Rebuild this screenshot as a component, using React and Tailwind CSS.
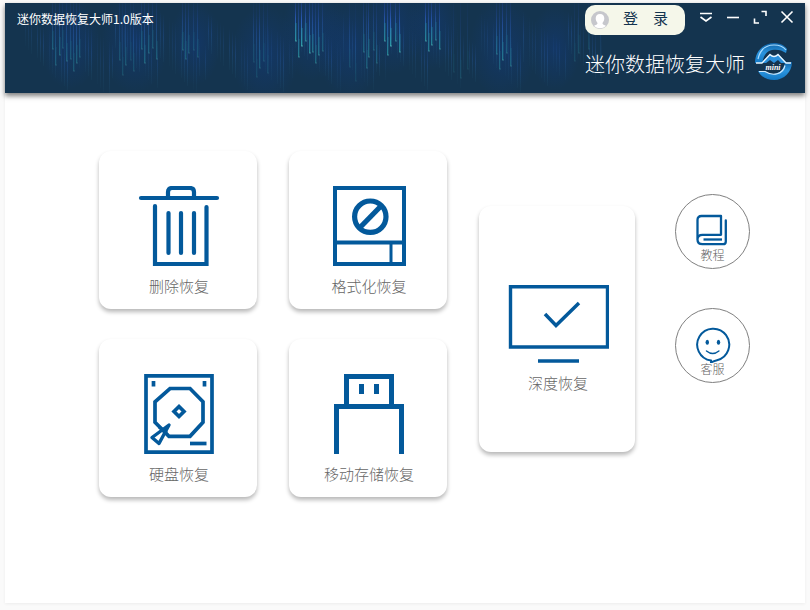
import React from "react";

// each streak is [x, bottom, strength]
const STREAKS = [
  [47, 46, 0.4], [50, 62, 0.35], [54, 52, 0.45], [57, 45, 0.3], [61, 58, 0.4],
  [65, 56, 0.35], [68, 68, 0.35], [71, 60, 0.4], [74, 54, 0.3],
  [114, 57, 0.3], [117, 72, 0.25], [120, 62, 0.35], [125, 57, 0.2], [128, 68, 0.25],
  [136, 46, 0.4], [139, 60, 0.45], [143, 50, 0.4], [147, 45, 0.35], [151, 56, 0.4],
  [177, 47, 0.4], [180, 56, 0.4], [183, 50, 0.35], [188, 47, 0.25], [192, 54, 0.3],
  [248, 59, 0.2], [251, 74, 0.2], [254, 65, 0.35], [258, 58, 0.25], [262, 70, 0.2],
  [290, 38, 0.9], [293, 54, 0.7], [296, 43, 1], [300, 38, 0.7], [304, 50, 0.8],
  [307, 49, 0.6], [310, 60, 0.5], [313, 52, 0.6], [317, 48, 0.4],
  [358, 49, 0.45], [361, 65, 0.4], [363, 54, 0.55], [368, 47, 0.35], [371, 60, 0.35],
  [379, 38, 0.8], [382, 52, 0.75], [385, 43, 1], [390, 38, 0.65], [394, 49, 0.8],
  [420, 38, 0.8], [423, 48, 0.7], [426, 42, 0.8], [430, 37, 0.55], [434, 46, 0.65],
  [491, 51, 0.45], [494, 66, 0.4], [497, 57, 0.65], [501, 50, 0.4], [505, 63, 0.45],
  [350, 78, 0.15], [344, 64, 0.2], [448, 69, 0.15], [455, 75, 0.2], [462, 66, 0.15],
  [569, 58, 0.2], [573, 50, 0.25], [583, 46, 0.2], [595, 72, 0.18],
];

const RAIN = Array.from({ length: 145 }, (_, i) => ({
  x: 20 + i * 4 - (i % 3),
  top: 8 + ((i * 37) % 34),
  height: 35 + ((i * 23) % 22),
  opacity: 0.14 + ((i * 7) % 6) * 0.04,
}));

const GLOWS = [
  [65, 40, 30], [130, 40, 34], [190, 40, 26], [260, 52, 34], [308, 30, 32],
  [345, 45, 34], [388, 25, 30], [428, 25, 26], [498, 45, 34], [550, 45, 26],
];

const Backdrop = () => (
  <svg
    className="absolute inset-0 w-full h-full"
    viewBox="0 0 800 90"
    preserveAspectRatio="xMinYMin slice"
    aria-hidden="true"
  >
    <defs>
      <linearGradient id="streak" x1="0" y1="0" x2="0" y2="1">
        <stop offset="0" stopColor="#2747a8" stopOpacity="0.35" />
        <stop offset="0.4" stopColor="#2f63c8" stopOpacity="0.8" />
        <stop offset="1" stopColor="#2a9aa6" />
      </linearGradient>
      <linearGradient id="rain" x1="0" y1="0" x2="0" y2="1">
        <stop offset="0" stopColor="#2555b5" stopOpacity="0" />
        <stop offset="0.5" stopColor="#265aa4" />
        <stop offset="1" stopColor="#2a6e8a" stopOpacity="0.2" />
      </linearGradient>
      <radialGradient id="glow">
        <stop offset="0" stopColor="#123a7c" stopOpacity="0.5" />
        <stop offset="1" stopColor="#123a7c" stopOpacity="0" />
      </radialGradient>
    </defs>
    {GLOWS.map(([x, y, r]) => (
      <ellipse key={x} cx={x} cy={y} rx={r} ry={r + 16} fill="url(#glow)" />
    ))}
    {RAIN.map((r) => (
      <rect key={r.x} x={r.x} y={r.top} width="1" height={r.height} fill="url(#rain)" opacity={r.opacity} />
    ))}
    {STREAKS.map(([x, bottom, strength]) => (
      <g key={x} opacity={strength}>
        <rect x={x} y="0" width="1" height={bottom} fill="url(#streak)" />
        <rect x={x} y={bottom - 18} width="2" height="18" fill="#2a9aa6" opacity="0.3" />
        <rect x={x} y={bottom - 1} width="2" height="2" fill="#4fb0b4" opacity="0.4" />
      </g>
    ))}
  </svg>
);

const Logo = () => (
  <svg className="w-[37px] h-[37px] shrink-0" viewBox="0 0 37 37" aria-hidden="true">
    <defs>
      <linearGradient id="logoBlue" x1="0" y1="0" x2="0" y2="1">
        <stop offset="0" stopColor="#0f63a8" />
        <stop offset="0.5" stopColor="#2a94de" />
        <stop offset="1" stopColor="#1277c4" />
      </linearGradient>
    </defs>
    <path
      d="M0 20C0 9 8 0 19 0c6 0 10 2 13 6l-1 4C27 7 22 6 17 7 12 8 9 12 8 17l-1 3Z"
      fill="url(#logoBlue)"
    />
    <path
      d="M37 19c0 10-8 18-18 18C12 37 6 34 3 28h6c4 3 9 4 13 2 4-1 6-4 7-7l1-4Z"
      fill="url(#logoBlue)"
    />
    <path d="M6 20l9-9 4 3 4-3 9 9h-6l-3-3-4 3-4-3-4 3Z" fill="#2a8fdb" />
    <path d="M3 16C5 7 11 2 19 2c5 0 9 1 12 5" fill="none" stroke="#a9dcff" strokeWidth="1.2" />
    <path d="M1 20h6l8-8.500q4 4 8 0l8 8.500h5" fill="none" stroke="#e8f6ff" strokeWidth="1.3" />
    <path d="M4 28.500h6c8 5 18 3 20-6" fill="none" stroke="#cfeaff" strokeWidth="1.2" />
    <text
      x="18"
      y="27"
      textAnchor="middle"
      fill="#fff"
      fontSize="8"
      fontStyle="italic"
      fontWeight="700"
      fontFamily="Liberation Serif, serif"
    >
      mini
    </text>
  </svg>
);

const TrashIcon = () => (
  <svg className="w-[84px] h-20" viewBox="0 0 84 80" fill="none" stroke="#03599b" strokeWidth="4.200" strokeLinecap="round">
    <path d="M5 12h76" />
    <path d="M32 11V6q0-4 4-4h18q4 0 4 4v5" />
    <path d="M19 20v58h51.500V21" />
    <path d="M32.500 27v40M45 27v40M58 27v40" />
  </svg>
);

const FormatIcon = () => (
  <svg className="w-[84px] h-20" viewBox="0 0 84 80" fill="none" stroke="#03599b" strokeWidth="4">
    <path d="M9 2h69v76H9ZM9 56.500h69" />
    <path d="M65 57v21" strokeWidth="3" />
    <circle cx="44.300" cy="30.700" r="15.700" strokeWidth="5.200" />
    <path d="M34 41.500L55 20" strokeWidth="5.200" />
  </svg>
);

const DiskIcon = () => (
  <svg className="w-[84px] h-20" viewBox="0 0 84 80" fill="none" stroke="#03599b" strokeWidth="3.700">
    <path d="M10 1.800h66v76.400H10Z" />
    <path d="M17.500 7v5.500M68.500 7v5.500" />
    <path d="M34 14.500h20l13 13.300v20.500L54 62.300H33L19 48.300V27.800Z" />
    <path d="M43 32.500l5 5-5 5-5-5Z" />
    <path d="M33 51L16 63.500l7 6Z" strokeWidth="3.400" strokeLinejoin="round" />
    <path d="M23 53l8 6" strokeWidth="3" />
    <path d="M54 69.500h16.500" />
  </svg>
);

const UsbIcon = () => (
  <svg className="w-[84px] h-20" viewBox="0 0 84 80" fill="none" stroke="#03599b" strokeWidth="5">
    <path d="M20.500 32V2.500h45V32" />
    <path d="M10.500 80V32.500h65V80" />
    <path d="M35.500 10v10M50.500 10v10" />
  </svg>
);

const MonitorIcon = () => (
  <svg className="w-[104px] h-[78px]" viewBox="0 0 104 78" fill="none" stroke="#03599b" strokeWidth="3.400">
    <path d="M5.500 1.700h97v60.300h-97Z" />
    <path d="M33 76h41" />
    <path d="M40 29l11 11.500L74 18" strokeWidth="3.500" />
  </svg>
);

const BookIcon = () => (
  <svg className="w-9 h-9" viewBox="1 0 36 36" fill="none" stroke="#03599b" strokeWidth="2.300" strokeLinejoin="round">
    <path d="M3.500 27V7q0-4 4-4H27v18.800H8.500q-5 0-5 4.700t5 4.700h20.500q2.800 0 2.800-2.800V7.500" strokeLinecap="round" />
    <path d="M9.500 26.500H28" />
  </svg>
);

const SmileIcon = () => (
  <svg className="w-9 h-9" viewBox="1 0 36 36" fill="none" stroke="#03599b" strokeWidth="2" strokeLinecap="round">
    <path d="M17 35v-1.500A16 16 0 1 1 23 33.200Q20 34 17 35.500" />
    <ellipse cx="13.300" cy="15.300" rx="1.700" ry="2.500" fill="#03599b" stroke="none" />
    <ellipse cx="24.500" cy="15.300" rx="1.700" ry="2.500" fill="#03599b" stroke="none" />
    <path d="M12.500 24q6.200 5 12.400 0" strokeWidth="1.500" />
  </svg>
);

const windowButtons = [
  { label: "菜单", path: "M1 3.500h12M1.500 7l5.500 4 5.500-4" },
  { label: "最小化", path: "M1 7.500h12" },
  { label: "最大化", path: "M8.500 1.500h4.500v4.500M1.500 8.500v4.500h4.500" },
  { label: "关闭", path: "M1.500 1.500l11 11M12.500 1.500l-11 11" },
];

const modes = [
  { label: "删除恢复", Icon: TrashIcon },
  { label: "格式化恢复", Icon: FormatIcon },
  { label: "硬盘恢复", Icon: DiskIcon },
  { label: "移动存储恢复", Icon: UsbIcon },
];

const links = [
  { label: "教程", Icon: BookIcon },
  { label: "客服", Icon: SmileIcon },
];

const Card = ({ label, Icon, className }) => (
  <button
    className={`flex flex-col items-center rounded-xl bg-white text-[15px] leading-5 text-[#666666] shadow-[0_3px_4px_rgba(0,0,0,0.28)] ${className}`}
  >
    <Icon />
    <span className="mt-2.5 pl-0.5">{label}</span>
  </button>
);

const Header = () => (
  <header className="relative flex justify-between overflow-hidden bg-[#14344f] text-white">
    <Backdrop />
    <h1 className="relative pl-3 pt-2 text-xs leading-4">迷你数据恢复大师1.0版本</h1>

    <div className="relative pt-0.5 pr-[5px] pb-[13px]">
      <div className="flex items-start">
        <button className="mr-[7px] flex h-[30px] w-[100px] items-center rounded-[10px] bg-[#f5f7ea] pl-1.5 text-[#14344f]">
          <svg className="w-[18px] h-[18px]" viewBox="0 0 18 18" aria-hidden="true">
            <circle cx="9" cy="9" r="9" fill="#c6c7cc" />
            <path d="M9 3c3 0 4.300 2 4.300 4.500S12 11 11.500 12c0 2 2 1.500 3.500 3a9 9 0 0 1-12 0c1.500-1.500 3.500-1 3.500-3C6 11 4.700 10 4.700 7.500S6 3 9 3Z" fill="#fff" />
          </svg>
          <span className="ml-3.5 -mt-1 text-[15px] leading-5">登　录</span>
        </button>
        {windowButtons.map((b) => (
          <button key={b.label} aria-label={b.label} className="flex h-6 w-[27px] items-center justify-center">
            <svg className="w-3.5 h-3.5" viewBox="0 0 14 14" fill="none" stroke="#fff" strokeWidth="1.600">
              <path d={b.path} />
            </svg>
          </button>
        ))}
      </div>

      <div className="mt-2 flex items-end gap-2.5">
        <span className="text-xl leading-8 font-light">迷你数据恢复大师</span>
        <Logo />
      </div>
    </div>
  </header>
);

export default function App() {
  return (
    <div className="flex min-h-screen flex-col bg-[#fafafa] px-[5px] pt-[3px] pb-[7px] font-['Noto_Sans_CJK_SC',sans-serif]">
      <div className="flex grow flex-col bg-white shadow-[0_1px_3px_rgba(0,0,0,0.06)]">
        <div className="shadow-[0_3px_5px_rgba(0,0,0,0.5)]">
          <Header />
        </div>

        <main className="flex items-start justify-center gap-8 pt-[58px] pb-10 pl-[39px] font-light">
          <div className="grid grid-cols-2 gap-x-8 gap-y-[30px]">
            {modes.map((m) => (
              <Card key={m.label} {...m} className="w-[158px] h-[158px] pt-[35px]" />
            ))}
          </div>

          <Card label="深度恢复" Icon={MonitorIcon} className="mt-[55px] w-[156px] h-[246px] pt-[79px]" />

          <nav className="ml-2 mt-[43px] flex flex-col gap-[39px]">
            {links.map(({ label, Icon }) => (
              <a
                key={label}
                href="#"
                className="flex h-[75px] w-[75px] flex-col items-center rounded-full border border-[#808080] pt-[18px] text-xs leading-4 text-[#606060]"
              >
                <Icon />
                <span className="-mt-0.5">{label}</span>
              </a>
            ))}
          </nav>
        </main>
      </div>
    </div>
  );
}
